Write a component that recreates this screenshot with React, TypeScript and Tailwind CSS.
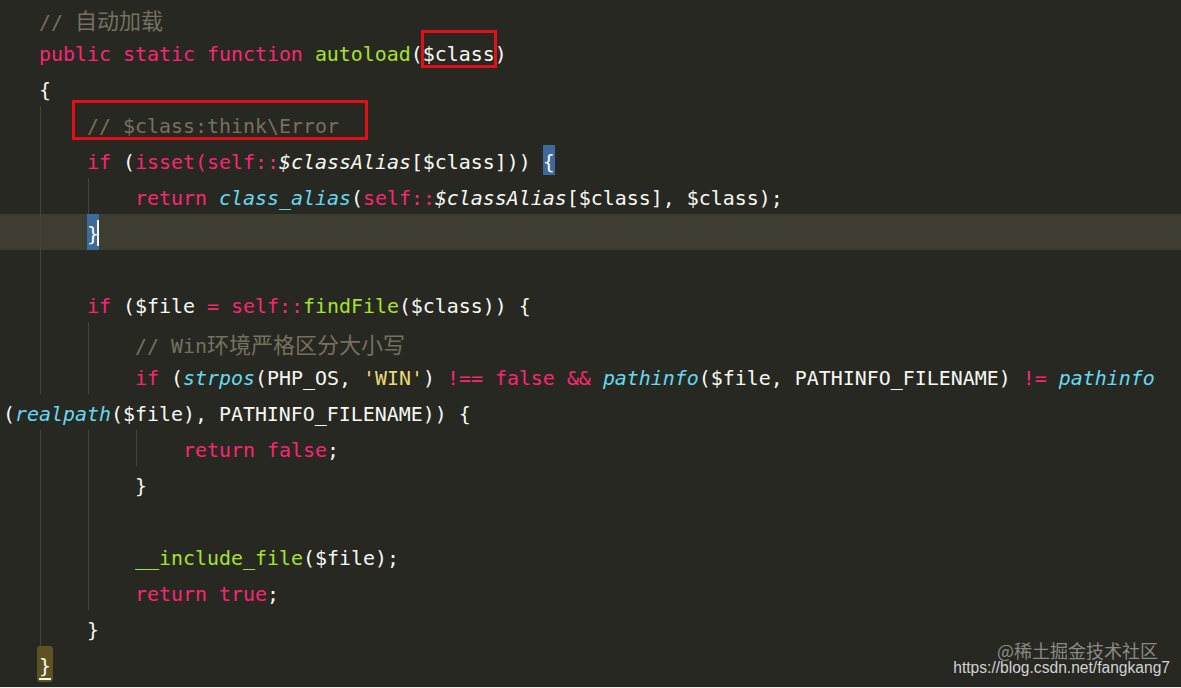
import type { ReactNode } from "react";
import clsx from "clsx";

// monokai-ish token colours
const K = "text-[#f92672]";
const F = "text-[#a6e22e]";
const C = "text-[#66d9ef] italic";
const S = "text-[#e6db74]";
const M = "text-[#75715e]";
const I = "italic";

type Tok = { t?: string; c?: string; node?: ReactNode };
type LineData = { level: number; toks: Tok[]; wrap?: boolean; hl?: boolean; overlay?: ReactNode };

const t = (text: string, c?: string): Tok => ({ t: text, c });

function Text({ text, c }: { text: string; c?: string }) {
  // CJK runs get their own font so they keep the wide width of the editor
  const parts = text.split(/([\u4e00-\u9fff]+)/).filter(Boolean);
  return (
    <span className={clsx("relative top-[3px]", c)}>
      {parts.map((p, i) =>
        /[\u4e00-\u9fff]/.test(p) ? (
          <span key={i} className="font-['Noto_Sans_CJK_SC',sans-serif] text-[22px]">
            {p}
          </span>
        ) : (
          p
        )
      )}
    </span>
  );
}

const lines: LineData[] = [
  { level: 0, toks: [t("// 自动加载", M)] },
  {
    level: 0,
    toks: [t("public static function", K), t(" "), t("autoload", F), t("($class)")],
    overlay: <div className="absolute left-[421px] top-[-4px] h-[38px] w-[76px] border-[3px] border-[#e3101a]" />,
  },
  { level: 0, toks: [t("{")] },
  {
    level: 1,
    toks: [t("// $class:think\\Error", M)],
    overlay: <div className="absolute left-[72px] top-[-6px] h-[40px] w-[296px] border-[3px] border-[#e3101a]" />,
  },
  {
    level: 1,
    toks: [
      t("if", K),
      t(" ("),
      t("isset(", K),
      t("self::", K),
      t("$classAlias", I),
      t("[$class])) "),
      {
        node: (
          <span className="inline-block bg-[#3c6a9c] leading-[30px]">
            <span className="relative top-[3px]">{"{"}</span>
          </span>
        ),
      },
    ],
  },
  {
    level: 2,
    toks: [t("return", K), t(" "), t("class_alias", C), t("("), t("self::", K), t("$classAlias", I), t("[$class], $class);")],
  },
  {
    level: 1,
    hl: true,
    toks: [
      {
        node: (
          <>
            <span className="inline-block bg-[#3c6a9c]">
              <span className="relative top-[3px]">{"}"}</span>
            </span>
            <span className="-ml-[2px] inline-block h-[26px] w-[2px] bg-[#f8f8f0] align-middle" />
          </>
        ),
      },
    ],
  },
  { level: 1, toks: [] },
  {
    level: 1,
    toks: [t("if", K), t(" ($file "), t("=", K), t(" "), t("self::", K), t("findFile", F), t("($class)) {")],
  },
  { level: 2, toks: [t("// Win环境严格区分大小写", M)] },
  {
    level: 2,
    toks: [
      t("if", K),
      t(" ("),
      t("strpos", C),
      t("(PHP_OS, "),
      t("'WIN'", S),
      t(") "),
      t("!==", K),
      t(" "),
      t("false", K),
      t(" "),
      t("&&", K),
      t(" "),
      t("pathinfo", C),
      t("($file, PATHINFO_FILENAME) "),
      t("!=", K),
      t(" "),
      t("pathinfo", C),
    ],
  },
  { level: 0, wrap: true, toks: [t("("), t("realpath", C), t("($file), PATHINFO_FILENAME)) {")] },
  { level: 3, toks: [t("return", K), t(" "), t("false", K), t(";")] },
  { level: 2, toks: [t("}")] },
  { level: 2, toks: [] },
  { level: 2, toks: [t("__include_file", F), t("($file);")] },
  { level: 2, toks: [t("return", K), t(" "), t("true", K), t(";")] },
  { level: 1, toks: [t("}")] },
  {
    level: 0,
    toks: [
      {
        node: (
          <span className="-mx-[2px] inline-block rounded-[3px] bg-[#5d5322] px-[2px]">
            <span className="relative top-[3px] underline decoration-[2px] underline-offset-[5px]">{"}"}</span>
          </span>
        ),
      },
    ],
  },
];

function Line({ level, toks, wrap, hl, overlay }: LineData) {
  return (
    <div className={clsx("relative flex h-[36px] whitespace-pre", hl && "bg-[#3e3d32]", wrap ? "pl-[3px]" : "pl-[39px]")}>
      {Array.from({ length: level }).map((_, j) => (
        <span key={j} className="flex h-full w-[48px] shrink-0">
          <span className="ml-px h-full w-px bg-[#44443c]" />
        </span>
      ))}
      <span>
        {toks.map((tk, j) => (tk.node ? <span key={j}>{tk.node}</span> : <Text key={j} text={tk.t ?? ""} c={tk.c} />))}
      </span>
      {overlay}
    </div>
  );
}

export default function App() {
  return (
    <div className="relative h-[688px] w-[1181px] overflow-hidden border-b border-[#ececec] bg-[#272822] font-['DejaVu_Sans_Mono',monospace] text-[19.93px] leading-[36px] text-[#f8f8f2]">
      <div className="-mt-[2px] flex flex-col">
        {lines.map((ln, i) => (
          <Line key={i} {...ln} />
        ))}
      </div>

      {/* watermark stamped over the screenshot */}
      <div className="pointer-events-none absolute bottom-[11px] right-[11px] flex flex-col items-end gap-[2px]">
        <span className="mr-[12px] font-['Noto_Sans_CJK_SC',sans-serif] text-[18px] leading-[16px] text-[#8a8a86]">@稀土掘金技术社区</span>
        <span className="font-['Liberation_Sans',sans-serif] text-[15.6px] leading-[16px] text-[#d2d2d2]">
          https://blog.csdn.net/fangkang7
        </span>
      </div>
    </div>
  );
}
